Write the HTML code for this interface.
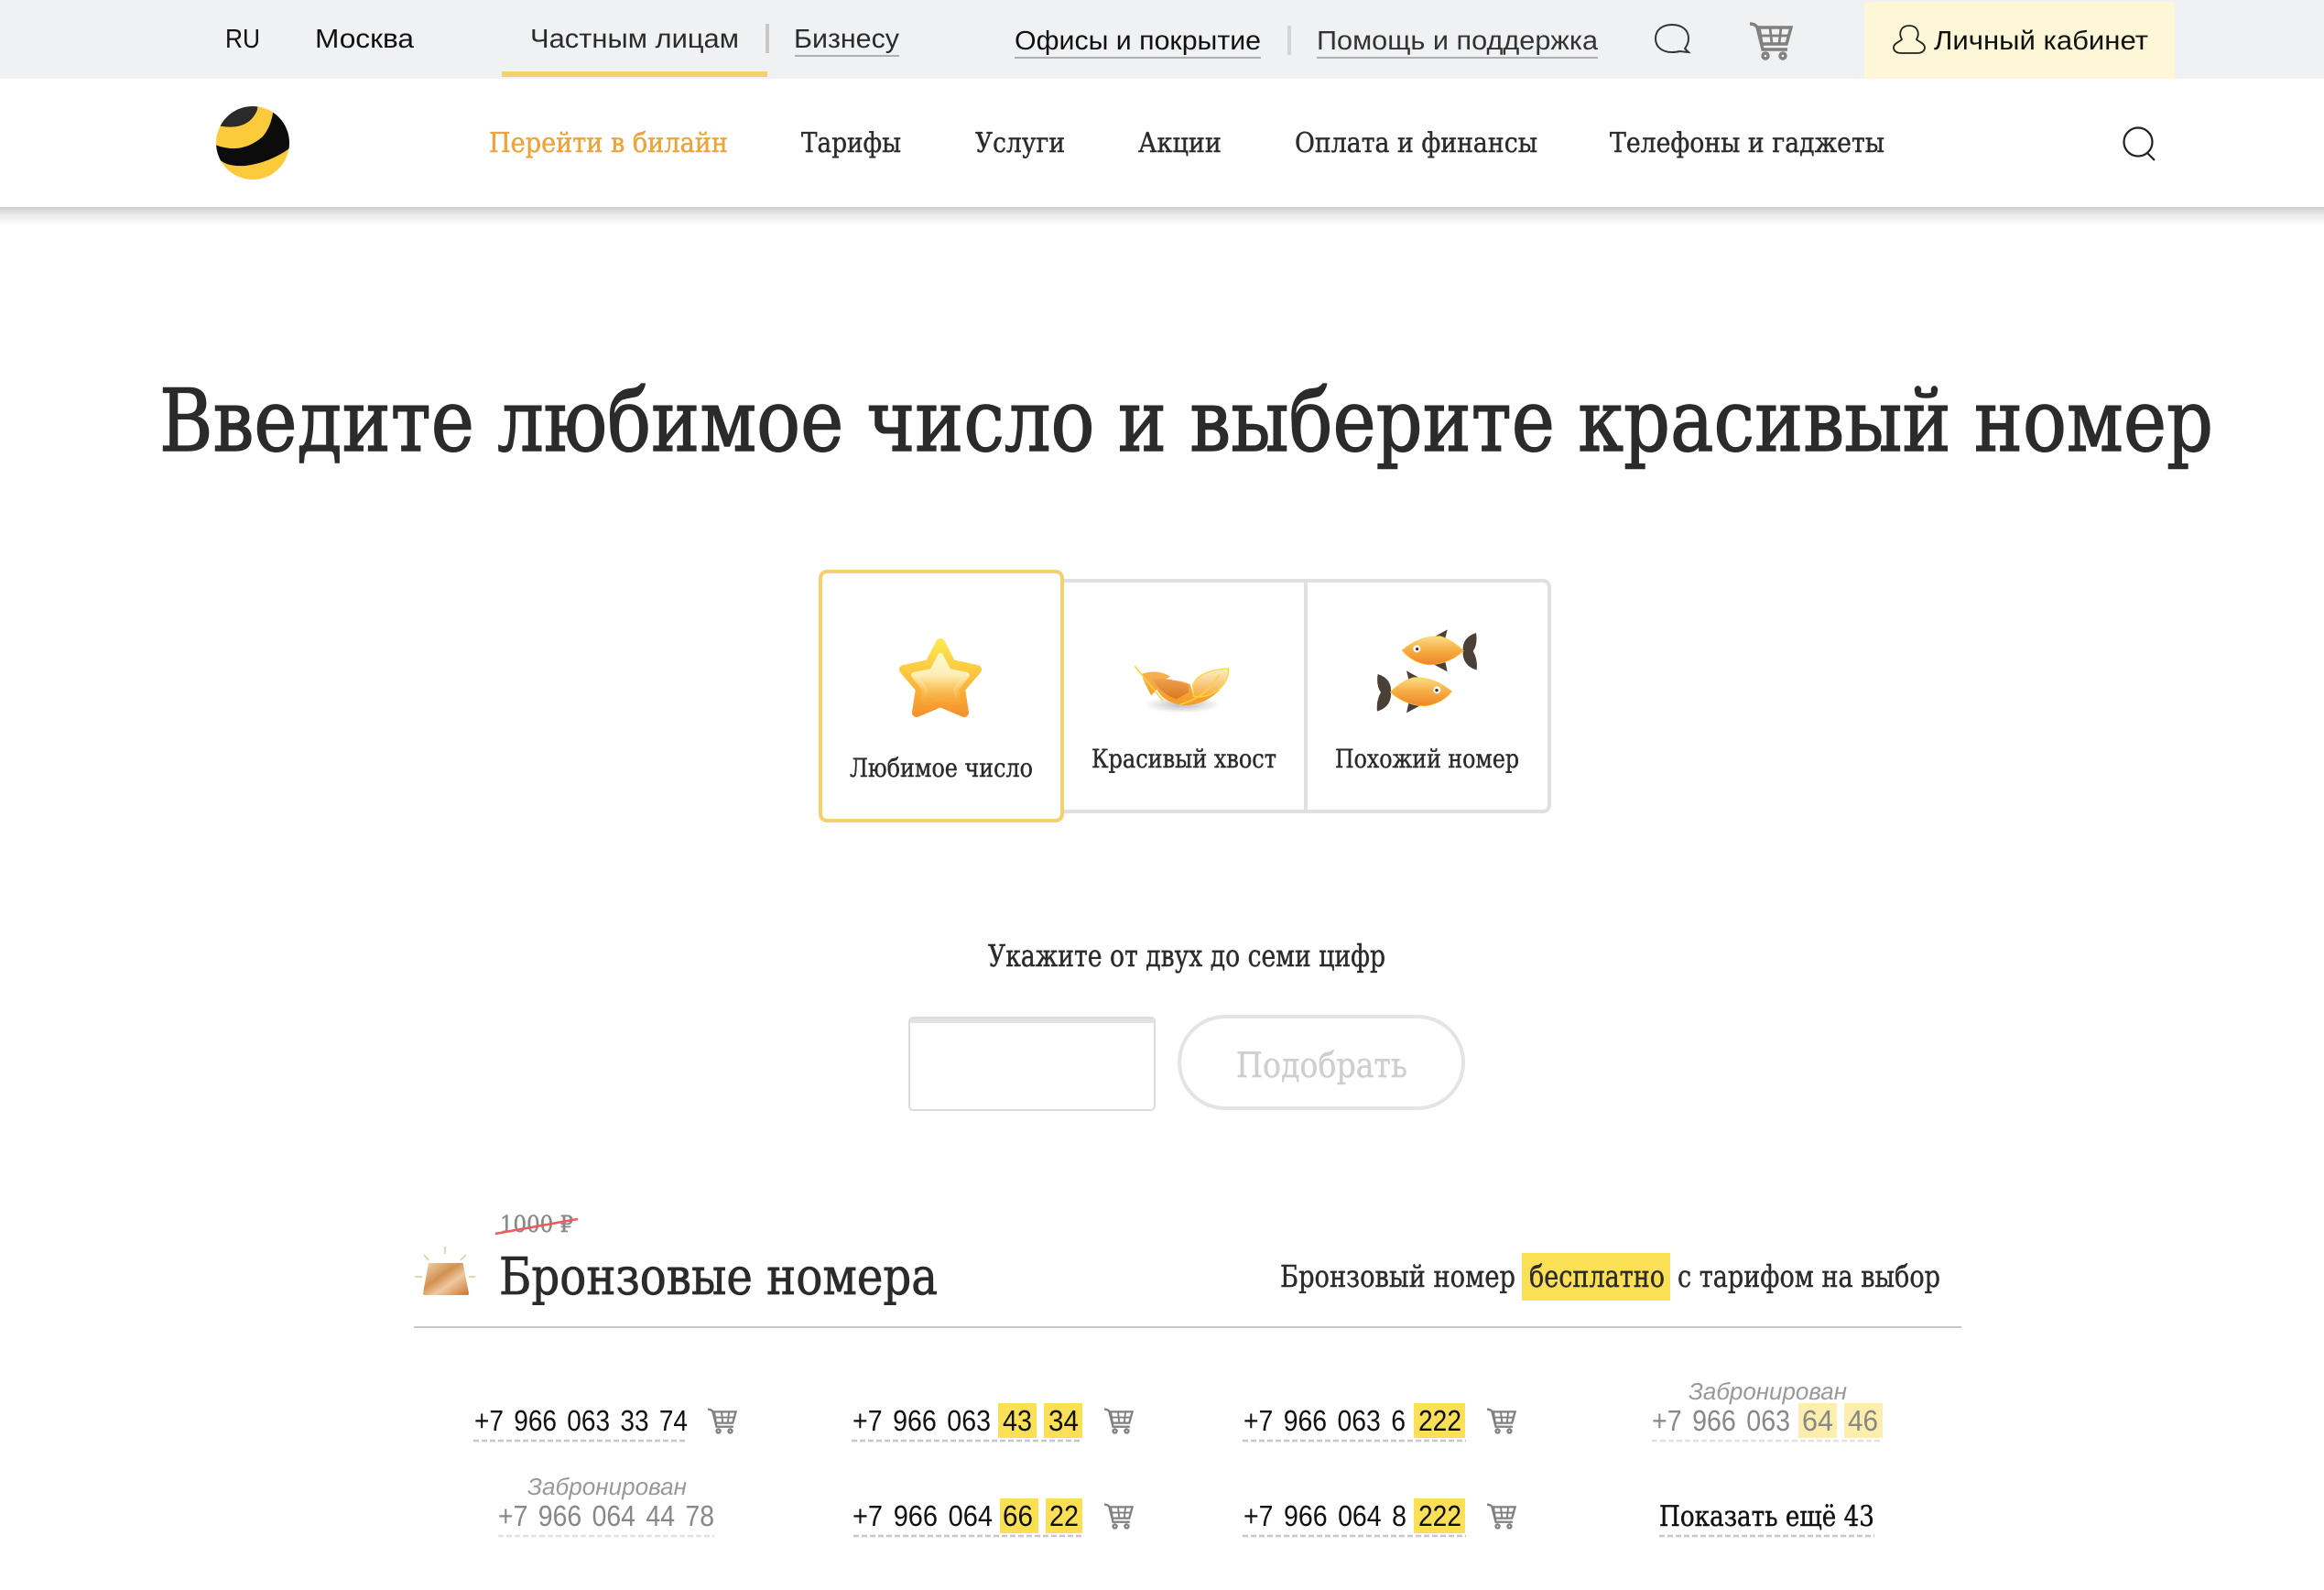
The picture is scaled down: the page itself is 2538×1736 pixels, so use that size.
<!DOCTYPE html>
<html lang="ru"><head><meta charset="utf-8"><title>Красивый номер</title>
<style>
html,body{margin:0;padding:0;background:#fff;width:2538px;height:1736px;overflow:hidden}
svg{display:block;text-rendering:geometricPrecision}
.s{font-family:"Liberation Sans",sans-serif}
.f{font-family:"DejaVu Serif","Liberation Serif",serif;fill:#2b2b2b;stroke:#2b2b2b;stroke-width:.45}
.d{font-family:"Liberation Sans",sans-serif;font-size:32px;fill:#111;word-spacing:4px}
.b{font-family:"Liberation Sans",sans-serif;font-style:italic;font-size:26px;fill:#999}
.u{stroke:#c6c6c6;stroke-width:2.5;stroke-dasharray:6 3;fill:none}
.ul{stroke:#e2e2e2;stroke-width:2.5;stroke-dasharray:6 3;fill:none}
</style></head><body>
<svg xmlns="http://www.w3.org/2000/svg" width="2538" height="1736" viewBox="0 0 2538 1736">
<defs>
<linearGradient id="sh" x1="0" y1="0" x2="0" y2="1"><stop offset="0" stop-color="#cfcfcf"/><stop offset=".5" stop-color="#eeeeee"/><stop offset="1" stop-color="#fff"/></linearGradient>
<linearGradient id="star" gradientUnits="userSpaceOnUse" x1="0" y1="697" x2="0" y2="785"><stop offset="0" stop-color="#fdeb4e"/><stop offset=".45" stop-color="#fbc440"/><stop offset="1" stop-color="#f38d2b"/></linearGradient>
<linearGradient id="star2" gradientUnits="userSpaceOnUse" x1="0" y1="715" x2="0" y2="770"><stop offset="0" stop-color="#fef8cf"/><stop offset=".4" stop-color="#fdeeb8"/><stop offset="1" stop-color="#f9b23f" stop-opacity="0"/></linearGradient>
<linearGradient id="fish" x1="0" y1="0" x2="0" y2="1"><stop offset="0" stop-color="#fbdc8a"/><stop offset=".45" stop-color="#f7b048"/><stop offset="1" stop-color="#ee8526"/></linearGradient>
<linearGradient id="fe" x1="0" y1="0" x2="0" y2="1"><stop offset="0" stop-color="#f6b250"/><stop offset="1" stop-color="#f49a28"/></linearGradient>
<linearGradient id="fe2" x1="0" y1="0" x2="0" y2="1"><stop offset="0" stop-color="#f0a050"/><stop offset="1" stop-color="#d9761e"/></linearGradient>
<linearGradient id="fe3" x1="0" y1="0" x2="0" y2="1"><stop offset="0" stop-color="#fcefc8"/><stop offset="1" stop-color="#f5a93e"/></linearGradient>
<linearGradient id="br" x1="0" y1="0" x2="1" y2="1"><stop offset="0" stop-color="#f4d5b0"/><stop offset=".4" stop-color="#d2914f"/><stop offset=".62" stop-color="#f0c8a0"/><stop offset="1" stop-color="#c47533"/></linearGradient>
<radialGradient id="fs"><stop offset="0" stop-color="#bbb"/><stop offset="1" stop-color="#fff"/></radialGradient>
<clipPath id="lc"><circle cx="276" cy="156" r="40"/></clipPath>
<g id="cart" fill="none" stroke="#808080" stroke-width="3.4">
<path d="M0 1 Q6 1 8 5 L14 29 H41"/><path d="M10 5 H45 L40 23 H13Z"/><path d="M22 5 L24 23 M34 5 L32 23 M11 14 H43" stroke-width="2.8"/>
<circle cx="17" cy="36" r="3"/><circle cx="36" cy="36" r="3"/></g>
<g id="fishg">
<path d="M1133 92 Q1130 48 1176 33 Q1182 70 1166 93 Q1182 120 1178 155 Q1130 140 1133 92Z" fill="#4a4038"/>
<path d="M1035 48 L1082 22 L1075 50Z M1035 135 L1082 160 L1075 128Z" fill="#4a4038"/>
<path d="M933 90 Q990 42 1060 44 Q1105 60 1135 92 Q1090 135 1020 138 Q965 130 933 90Z" fill="url(#fish)" stroke="#fbd33a" stroke-width="2"/>
<circle cx="982" cy="85" r="12" fill="#fff"/><circle cx="983" cy="86" r="5" fill="#3a3028"/>
</g>
</defs>

<!-- top bar -->
<rect width="2538" height="86" fill="#f0f1f3"/>
<text class="s" x="246" y="52" font-size="29" fill="#111" textLength="38" lengthAdjust="spacingAndGlyphs">RU</text>
<text class="s" x="344" y="52" font-size="29" fill="#111" textLength="108" lengthAdjust="spacingAndGlyphs">Москва</text>
<text class="s" x="579" y="52" font-size="29" fill="#2b2b2b" textLength="228" lengthAdjust="spacingAndGlyphs">Частным лицам</text>
<rect x="836" y="26" width="4" height="32" fill="#c8c8c8"/>
<text class="s" x="867" y="52" font-size="29" fill="#2b2b2b" textLength="115" lengthAdjust="spacingAndGlyphs">Бизнесу</text>
<rect x="868" y="60" width="114" height="2" fill="#b0b0b0"/>
<rect x="548" y="78" width="290" height="6" fill="#f5d06f"/>
<text class="s" x="1108" y="54" font-size="29" fill="#111" textLength="269" lengthAdjust="spacingAndGlyphs">Офисы и покрытие</text>
<rect x="1108" y="62" width="269" height="2" fill="#b0b0b0"/>
<rect x="1406" y="28" width="4" height="32" fill="#d4d4d4"/>
<text class="s" x="1438" y="54" font-size="29" fill="#333" textLength="307" lengthAdjust="spacingAndGlyphs">Помощь и поддержка</text>
<rect x="1438" y="62" width="307" height="2" fill="#b0b0b0"/>
<path d="M1808 42 C1808 32 1816 27 1826 27 C1836 27 1844 32 1844 42 C1844 47 1842 50 1840 53 L1844 57 L1834 56 C1831 57 1829 57 1826 57 C1816 57 1808 52 1808 42Z" fill="none" stroke="#333" stroke-width="2"/>
<use href="#cart" x="1911" y="25"/>
<rect x="2036" y="2" width="339" height="84" fill="#fdf7d7"/>
<path d="M2077 43 C2073 36 2076 28 2085 28 C2094 28 2097 36 2093 43 C2094 45 2102 47 2102 52 C2102 56 2098 58 2094 58 H2076 C2072 58 2068 56 2068 52 C2068 47 2076 45 2077 43Z" fill="none" stroke="#222" stroke-width="1.8"/>
<text class="s" x="2112" y="54" font-size="29" fill="#111" textLength="234" lengthAdjust="spacingAndGlyphs">Личный кабинет</text>

<!-- header -->
<rect y="226" width="2538" height="20" fill="url(#sh)"/>
<g clip-path="url(#lc)">
<rect x="236" y="116" width="80" height="80" fill="#fbcb3c"/>
<path d="M232 136 L250 108 L282 108 L281 120 Q272 142 243 138Z" fill="#2a2a2a"/>
<path d="M230 156 Q262 171 287 149 Q298 136 299 114 L325 125 L325 155 Q300 177 268 181 Q250 182 242 176 L228 165Z" fill="#0c0c0c"/>
<path d="M318 165 Q310 188 280 198 L322 205Z" fill="#333"/>
</g>
<text class="f" x="534" y="166" font-size="30" style="fill:#eda33a;stroke:#eda33a" textLength="261" lengthAdjust="spacingAndGlyphs">Перейти в билайн</text>
<text class="f" x="875" y="166" font-size="30" textLength="109" lengthAdjust="spacingAndGlyphs">Тарифы</text>
<text class="f" x="1065" y="166" font-size="30" textLength="98" lengthAdjust="spacingAndGlyphs">Услуги</text>
<text class="f" x="1243" y="166" font-size="30" textLength="91" lengthAdjust="spacingAndGlyphs">Акции</text>
<text class="f" x="1414" y="166" font-size="30" textLength="265" lengthAdjust="spacingAndGlyphs">Оплата и финансы</text>
<text class="f" x="1758" y="166" font-size="30" textLength="300" lengthAdjust="spacingAndGlyphs">Телефоны и гаджеты</text>
<circle cx="2335" cy="155" r="15.5" fill="none" stroke="#222" stroke-width="2.2"/>
<path d="M2345 167 L2353 175" stroke="#222" stroke-width="2.2"/>

<!-- title -->
<text class="f" x="174" y="492" font-size="94" style="stroke-width:1.4" textLength="2243" lengthAdjust="spacingAndGlyphs">Введите любимое число и выберите красивый номер</text>

<!-- cards -->
<rect x="1100" y="634" width="592" height="252" rx="7" fill="#fff" stroke="#e0e0e0" stroke-width="4"/>
<rect x="1424" y="634" width="4" height="252" fill="#e0e0e0"/>
<rect x="896" y="624" width="264" height="272" rx="7" fill="#fff" stroke="#f5d06f" stroke-width="4"/>
<path d="M1027 702 L1039 725 L1067 731 L1049 752 L1053 778 L1027 767 L1001 778 L1005 752 L987 731 L1015 725Z" fill="url(#star)" stroke="url(#star)" stroke-width="10" stroke-linejoin="round"/>
<path d="M1027 716 L1036 733 L1056 737 L1044 753 L1048 775 L1027 765 L1006 775 L1010 753 L998 737 L1018 733Z" fill="url(#star2)" stroke="url(#star2)" stroke-width="6" stroke-linejoin="round"/>
<text class="f" x="928" y="848" font-size="28" textLength="200" lengthAdjust="spacingAndGlyphs">Любимое число</text>
<text class="f" x="1192" y="838" font-size="28" textLength="202" lengthAdjust="spacingAndGlyphs">Красивый хвост</text>
<text class="f" x="1458" y="838" font-size="28" textLength="201" lengthAdjust="spacingAndGlyphs">Похожий номер</text>
<g transform="translate(1220 680) scale(.33333)">
<ellipse cx="215" cy="268" rx="125" ry="28" fill="url(#fs)"/>
<path d="M80 168 Q130 150 175 176 L148 190 L180 188 Q225 192 240 203 L250 240 L338 218 Q290 268 225 270 Q155 266 130 218 L112 238 Q90 200 80 168Z" fill="url(#fe)"/>
<path d="M115 185 Q170 176 232 203 L234 228 L195 250 Q150 238 115 185Z" fill="url(#fe2)"/>
<path d="M248 205 Q265 155 365 150 Q365 195 330 220 Q290 250 250 240Z" fill="url(#fe3)" stroke="#fbd83a" stroke-width="4"/>
<path d="M58 142 L150 255 M205 268 Q290 245 335 170" fill="none" stroke="#fbd33a" stroke-width="4.5"/>
<use href="#fishg"/>
<g transform="translate(2030 135) scale(-1 1)"><use href="#fishg"/></g>
</g>

<!-- form -->
<text class="f" x="1079" y="1055" font-size="33" textLength="434" lengthAdjust="spacingAndGlyphs">Укажите от двух до семи цифр</text>
<rect x="993" y="1111" width="268" height="101" rx="4" fill="#fff" stroke="#dcdcdc" stroke-width="2"/>
<rect x="994" y="1112" width="266" height="5" fill="#e2e2e2"/>
<rect x="1288" y="1110" width="310" height="100" rx="50" fill="#fff" stroke="#e4e4e4" stroke-width="4"/>
<text class="f" x="1350" y="1176" font-size="38" style="fill:#cfcfcf;stroke:#cfcfcf" textLength="187" lengthAdjust="spacingAndGlyphs">Подобрать</text>

<!-- bronze -->
<text class="f" x="546" y="1345" font-size="25" style="fill:#888;stroke:#888" textLength="80" lengthAdjust="spacingAndGlyphs">1000 ₽</text>
<path d="M541 1347 L631 1331" stroke="#ee5a5a" stroke-width="2.5"/>
<path d="M468 1379 H505.5 L512 1412 Q512 1414 510 1414 H464 Q462 1414 462 1412Z" fill="url(#br)"/>
<path d="M486 1361 V1369 M463 1370 L468 1376 M509 1370 L503 1376 M453 1394 H461 M512 1394 H519" stroke="#e8c49c" stroke-width="1.5" fill="none"/>
<text class="f" x="545" y="1413" font-size="56" style="stroke-width:.8" textLength="479" lengthAdjust="spacingAndGlyphs">Бронзовые номера</text>
<text class="f" x="1398" y="1405" font-size="33" textLength="257" lengthAdjust="spacingAndGlyphs">Бронзовый номер</text>
<rect x="1662" y="1368" width="162" height="52" fill="#fbe055"/>
<text class="f" x="1670" y="1405" font-size="33" textLength="148" lengthAdjust="spacingAndGlyphs">бесплатно</text>
<text class="f" x="1832" y="1405" font-size="33" textLength="287" lengthAdjust="spacingAndGlyphs">с тарифом на выбор</text>
<rect x="452" y="1448" width="1690" height="2" fill="#c8c8c8"/>

<!-- numbers row 1 -->
<text class="d" x="518" y="1562" textLength="233" lengthAdjust="spacingAndGlyphs">+7 966 063 33 74</text>
<path class="u" d="M517 1573 H751"/>
<use href="#cart" transform="translate(773 1538) scale(.68)"/>

<text class="d" x="931" y="1562" textLength="151" lengthAdjust="spacingAndGlyphs">+7 966 063</text>
<rect x="1090" y="1532" width="42" height="38" fill="#fbe055"/><rect x="1140" y="1532" width="42" height="38" fill="#fbe055"/>
<text class="d" x="1095" y="1562" textLength="32" lengthAdjust="spacingAndGlyphs">43</text>
<text class="d" x="1145" y="1562" textLength="33" lengthAdjust="spacingAndGlyphs">34</text>
<path class="u" d="M930 1573 H1182"/>
<use href="#cart" transform="translate(1206 1538) scale(.68)"/>

<text class="d" x="1358" y="1562" textLength="177" lengthAdjust="spacingAndGlyphs">+7 966 063 6</text>
<rect x="1544" y="1532" width="56" height="38" fill="#fbe055"/>
<text class="d" x="1549" y="1562" textLength="47" lengthAdjust="spacingAndGlyphs">222</text>
<path class="u" d="M1357 1573 H1601"/>
<use href="#cart" transform="translate(1624 1538) scale(.68)"/>

<text class="b" x="1844" y="1528" textLength="173" lengthAdjust="spacingAndGlyphs">Забронирован</text>
<text class="d" x="1804" y="1562" style="fill:#888" textLength="151" lengthAdjust="spacingAndGlyphs">+7 966 063</text>
<rect x="1964" y="1532" width="42" height="38" fill="#feeeae"/><rect x="2014" y="1532" width="42" height="38" fill="#feeeae"/>
<text class="d" x="1968" y="1562" style="fill:#888" textLength="34" lengthAdjust="spacingAndGlyphs">64</text>
<text class="d" x="2018" y="1562" style="fill:#888" textLength="33" lengthAdjust="spacingAndGlyphs">46</text>
<path class="ul" d="M1804 1573 H2056"/>

<!-- numbers row 2 -->
<text class="b" x="576" y="1632" textLength="174" lengthAdjust="spacingAndGlyphs">Забронирован</text>
<text class="d" x="544" y="1666" style="fill:#888" textLength="236" lengthAdjust="spacingAndGlyphs">+7 966 064 44 78</text>
<path class="ul" d="M544 1677 H780"/>

<text class="d" x="931" y="1666" textLength="153" lengthAdjust="spacingAndGlyphs">+7 966 064</text>
<rect x="1092" y="1636" width="42" height="38" fill="#fbe055"/><rect x="1142" y="1636" width="40" height="38" fill="#fbe055"/>
<text class="d" x="1095" y="1666" textLength="33" lengthAdjust="spacingAndGlyphs">66</text>
<text class="d" x="1146" y="1666" textLength="32" lengthAdjust="spacingAndGlyphs">22</text>
<path class="u" d="M932 1677 H1182"/>
<use href="#cart" transform="translate(1206 1642) scale(.68)"/>

<text class="d" x="1358" y="1666" textLength="178" lengthAdjust="spacingAndGlyphs">+7 966 064 8</text>
<rect x="1544" y="1636" width="56" height="38" fill="#fbe055"/>
<text class="d" x="1549" y="1666" textLength="47" lengthAdjust="spacingAndGlyphs">222</text>
<path class="u" d="M1357 1677 H1601"/>
<use href="#cart" transform="translate(1624 1642) scale(.68)"/>

<text class="f" x="1812" y="1666" font-size="31" style="fill:#111;stroke:#111" textLength="235" lengthAdjust="spacingAndGlyphs">Показать ещё 43</text>
<path class="u" d="M1812 1677 H2047"/>
</svg>
</body></html>
